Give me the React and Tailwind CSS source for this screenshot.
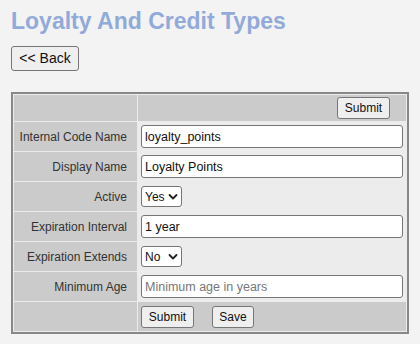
import React from "react";

const font = { fontFamily: '"Liberation Sans", Arial, sans-serif' };

function Chevron() {
  return (
    <svg width="10" height="7" viewBox="0 0 10 7" className="pointer-events-none absolute right-[4px] top-1/2 -translate-y-1/2">
      <path d="M1.5 1.5 L5 5 L8.5 1.5" fill="none" stroke="#222" strokeWidth="1.8" strokeLinecap="round" strokeLinejoin="round" />
    </svg>
  );
}

function Pick({ value, options, w }) {
  return (
    <div className={`relative inline-block align-middle ${w}`}>
      <select
        defaultValue={value}
        className="h-[21px] w-full appearance-none rounded-[3px] border border-[#767676] bg-white pl-[3px] pr-4 text-[12px] text-[#111] outline-none"
      >
        {options.map((o) => (
          <option key={o}>{o}</option>
        ))}
      </select>
      <Chevron />
    </div>
  );
}

function Field({ value, placeholder }) {
  return (
    <input
      defaultValue={value}
      placeholder={placeholder}
      className="block h-[23px] w-full rounded-[3px] border border-[#767676] bg-white px-[3px] text-[12.5px] text-[#111] outline-none placeholder:text-[#777]"
    />
  );
}

const btn =
  "rounded-[3px] border border-[#767676] bg-[#efefef] text-[#111]";

export default function App() {
  const rows = [
    ["Internal Code Name", <Field value="loyalty_points" />],
    ["Display Name", <Field value="Loyalty Points" />],
    ["Active", <Pick value="Yes" options={["Yes", "No"]} w="w-[41px]" />],
    ["Expiration Interval", <Field value="1 year" />],
    ["Expiration Extends", <Pick value="No" options={["Yes", "No"]} w="w-[41px]" />],
    ["Minimum Age", <Field placeholder="Minimum age in years" />],
  ];

  return (
    <div className="min-h-[344px] bg-[#f3f3f3] pl-[11px] pt-[8px]" style={font}>
      <h1 className="text-[23px] font-bold leading-[26px] text-[#92aad9]">
        Loyalty And Credit Types
      </h1>

      <button className={`${btn} mt-[12px] h-[25px] w-[68px] text-[14px]`}>
        &lt;&lt; Back
      </button>

      <table className="mt-[21px] w-[398px] border-separate border-spacing-[1px] border-2 border-[#888] bg-[#ececec] text-[12px]">
        <tbody>
          <tr className="h-[26px] bg-[#cbcbcb]">
            <td className="w-[123px]"></td>
            <td className="pr-[16px] text-right">
              <button className={`${btn} h-[22px] w-[53px] text-[12px]`}>Submit</button>
            </td>
          </tr>

          {rows.map(([label, control]) => (
            <tr key={label} className="h-[29px]">
              <td className="bg-[#cbcbcb] pr-[10px] text-right text-[#333]">{label}</td>
              <td className="px-[3px]">{control}</td>
            </tr>
          ))}

          <tr className="h-[29px] bg-[#cbcbcb]">
            <td></td>
            <td className="px-[3px]">
              <div className="flex gap-[18px]">
                <button className={`${btn} h-[22px] w-[53px] text-[12px]`}>Submit</button>
                <button className={`${btn} h-[22px] w-[42px] text-[12px]`}>Save</button>
              </div>
            </td>
          </tr>
        </tbody>
      </table>
    </div>
  );
}
